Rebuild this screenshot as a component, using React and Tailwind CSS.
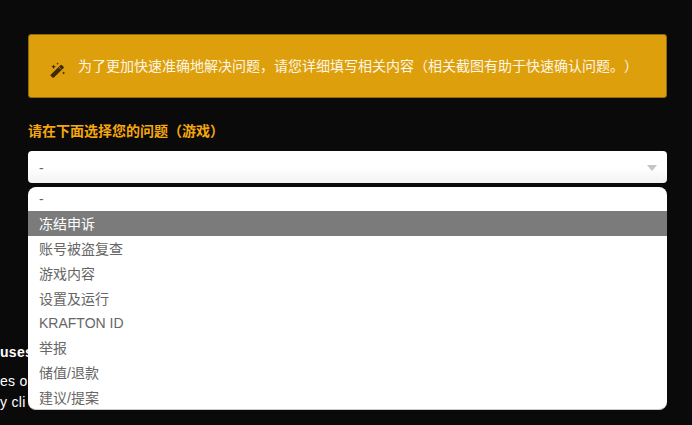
import React from "react";

const options = ["账号被盗复查", "游戏内容", "设置及运行", "KRAFTON ID", "举报", "储值/退款", "建议/提案"];

function Wand() {
  return (
    <svg width="16" height="16" viewBox="0 0 16 16" className="mt-[7px] shrink-0">
      <path d="M.9 12.4 10.4 3.2a1.1 1.1 0 0 1 1.6 0l1.4 1.4a1.1 1.1 0 0 1 0 1.6L4 15.4a1.1 1.1 0 0 1-1.6 0L.9 14a1.1 1.1 0 0 1 0-1.6Z" fill="#3f2c05" />
      <path d="M8.8 5 11.2 7.5" stroke="#dd9e0c" strokeWidth="0.8" />
      <path d="M3.6 2.4 4.3 4l1.6.7-1.6.7-.7 1.6-.7-1.6-1.6-.7 1.6-.7ZM13.6 9.4l.5 1.1 1.1.5-1.1.5-.5 1.1-.5-1.1-1.1-.5 1.1-.5ZM7.6.4l.4.9.9.4-.9.4-.4.9-.4-.9-.9-.4.9-.4Z" fill="#3f2c05" />
    </svg>
  );
}

export default function App() {
  return (
    <div className="h-[425px] w-[692px] overflow-hidden bg-[#0a0a0a] font-['Liberation_Sans','Noto_Sans_CJK_SC',sans-serif]">
      <div className="w-[639px] ml-7 pt-[34px]">
        <div className="flex h-16 items-center gap-[12px] rounded-[3px] border border-[#8f6a10] bg-[#de9f0c] pl-[21px] text-sm text-[#fdf6e3]">
          <Wand />
          <span className="[text-spacing-trim:space-all]">为了更加快速准确地解决问题，请您详细填写相关内容（相关截图有助于快速确认问题。）</span>
        </div>
        <div className="mt-[23px] text-sm leading-5 font-bold text-[#f5a70f]">请在下面选择您的问题（游戏）</div>
        <div className="relative mt-[10px]">
          <div className="flex h-8 items-center justify-between rounded-[4px] bg-gradient-to-b from-white via-white to-[#f3f3f3] pl-[11px] pr-[10px] pt-0.5 text-sm text-[#666]">
            <span>-</span>
            <span className="h-0 w-0 border-x-[5px] border-t-[6px] border-x-transparent border-t-[#c4c4c4]" />
          </div>
          {/* open dropdown lies over the page */}
          <div className="absolute left-0 top-9 z-10 h-[223px] w-full overflow-hidden rounded-lg border-b border-[#c8c8c8] bg-white text-sm text-[#666]">
            <div className="flex h-6 items-center pl-[11px]">-</div>
            <div className="flex h-[25px] items-center bg-[#7b7b7b] pl-[11px] text-white">冻结申诉</div>
            {options.map((o) => (
              <div key={o} className={`flex items-center pl-[11px] ${o === "KRAFTON ID" ? "h-6" : "h-[25px]"}`}>{o}</div>
            ))}
          </div>
        </div>
      </div>
      {/* what shows of the cookie notice beside the dropdown */}
      <div className="mt-[159px] text-sm leading-5 tracking-[0.3px] text-white">
        <div className="font-bold">uses</div>
        <div className="mt-[9px]">es o</div>
        <div className="mt-px">y cli</div>
      </div>
    </div>
  );
}
